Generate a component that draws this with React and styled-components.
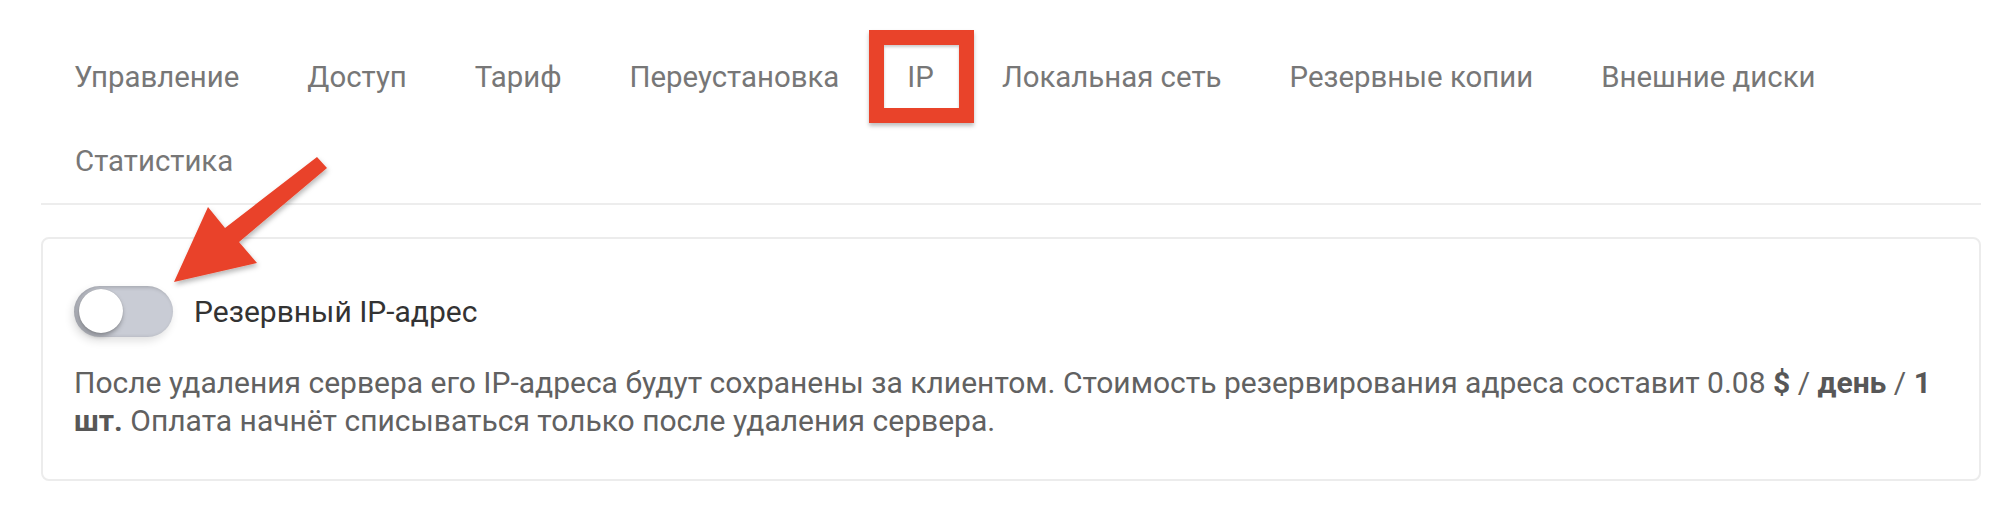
import React from "react";
import styled, { createGlobalStyle } from "styled-components";

const Global = createGlobalStyle`
  html, body { margin: 0; padding: 0; background: #ffffff; }
  body { font-family: Roboto, "Noto Sans", "Liberation Sans", sans-serif; }
  * { box-sizing: border-box; }
`;

const Page = styled.div`
  position: relative;
  padding: 35px 19px 29px 41px;
`;

const Tabs = styled.nav`
  display: flex;
  flex-wrap: wrap;
  border-bottom: 2px solid #ededed;
`;

const Tab = styled.div`
  position: relative;
  padding: 28px 34px;
  font-size: 29.4px;
  line-height: 28px;
  color: #777777;
  white-space: nowrap;
  &:first-child { padding-left: 33px; }
`;

const Highlight = styled.span`
  position: absolute;
  left: -4px;
  right: -6px;
  top: -5px;
  bottom: -4px;
  border: 15px solid #e9432a;
  box-shadow: 0 3px 4px rgba(0, 0, 0, 0.25), inset 0 2px 3px rgba(0, 0, 0, 0.2);
  pointer-events: none;
`;

const Card = styled.section`
  margin-top: 32px;
  border: 2px solid #ececec;
  border-radius: 8px;
  padding: 47px 31px 39px;
`;

const ToggleRow = styled.label`
  display: flex;
  align-items: center;
  gap: 21px;
`;

const Track = styled.span`
  position: relative;
  display: inline-block;
  width: 99px;
  height: 51px;
  border-radius: 26px;
  background: #c9ccd5;
  box-shadow: inset 2px 1px 4px rgba(0, 0, 0, 0.22), -2px 4px 8px rgba(0, 0, 0, 0.12);
  flex: none;
`;

const Knob = styled.span`
  position: absolute;
  left: ${(p) => (p.$on ? "51px" : "5px")};
  top: 3px;
  width: 44px;
  height: 44px;
  border-radius: 50%;
  background: #ffffff;
  box-shadow: -1px 3px 5px rgba(0, 0, 0, 0.35), 0 0 1px rgba(0, 0, 0, 0.2);
`;

const Label = styled.span`
  font-size: 30px;
  line-height: 34px;
  color: #333333;
`;

const Description = styled.p`
  margin: 27px 0 0;
  font-size: 30px;
  line-height: 38px;
  color: #616161;
`;

const Strong = styled.b`
  font-weight: 700;
  color: #575757;
`;

const Overlay = styled.svg`
  position: absolute;
  left: 0;
  top: 0;
  width: 2000px;
  height: 512px;
  pointer-events: none;
  overflow: visible;
`;

const tabs = [
  "Управление",
  "Доступ",
  "Тариф",
  "Переустановка",
  "IP",
  "Локальная сеть",
  "Резервные копии",
  "Внешние диски",
  "Статистика",
];

export default function App() {
  return (
    <>
      <Global />
      <Page>
        <Tabs>
          {tabs.map((t) => (
            <Tab key={t}>
              {t}
              {t === "IP" && <Highlight />}
            </Tab>
          ))}
        </Tabs>
        <Card>
          <ToggleRow>
            <Track>
              <Knob $on={false} />
            </Track>
            <Label>Резервный IP-адрес</Label>
          </ToggleRow>
          <Description>
            После удаления сервера его IP-адреса будут сохранены за клиентом.
            Стоимость резервирования адреса составит 0.08 <Strong>$</Strong> /{" "}
            <Strong>день</Strong> / <Strong>1</Strong> <Strong>шт.</Strong> Оплата
            начнёт списываться только после удаления сервера.
          </Description>
        </Card>
        <Overlay viewBox="0 0 2000 512">
          <defs>
            <filter id="sh" x="-20%" y="-20%" width="140%" height="140%">
              <feDropShadow dx="1" dy="3" stdDeviation="2.5" floodColor="#000" floodOpacity="0.28" />
            </filter>
          </defs>
          <polygon
            points="317,157 327,168 239,242 257,263 174,282 208,207 225,228"
            fill="#e9432a"
            filter="url(#sh)"
          />
        </Overlay>
      </Page>
    </>
  );
}
